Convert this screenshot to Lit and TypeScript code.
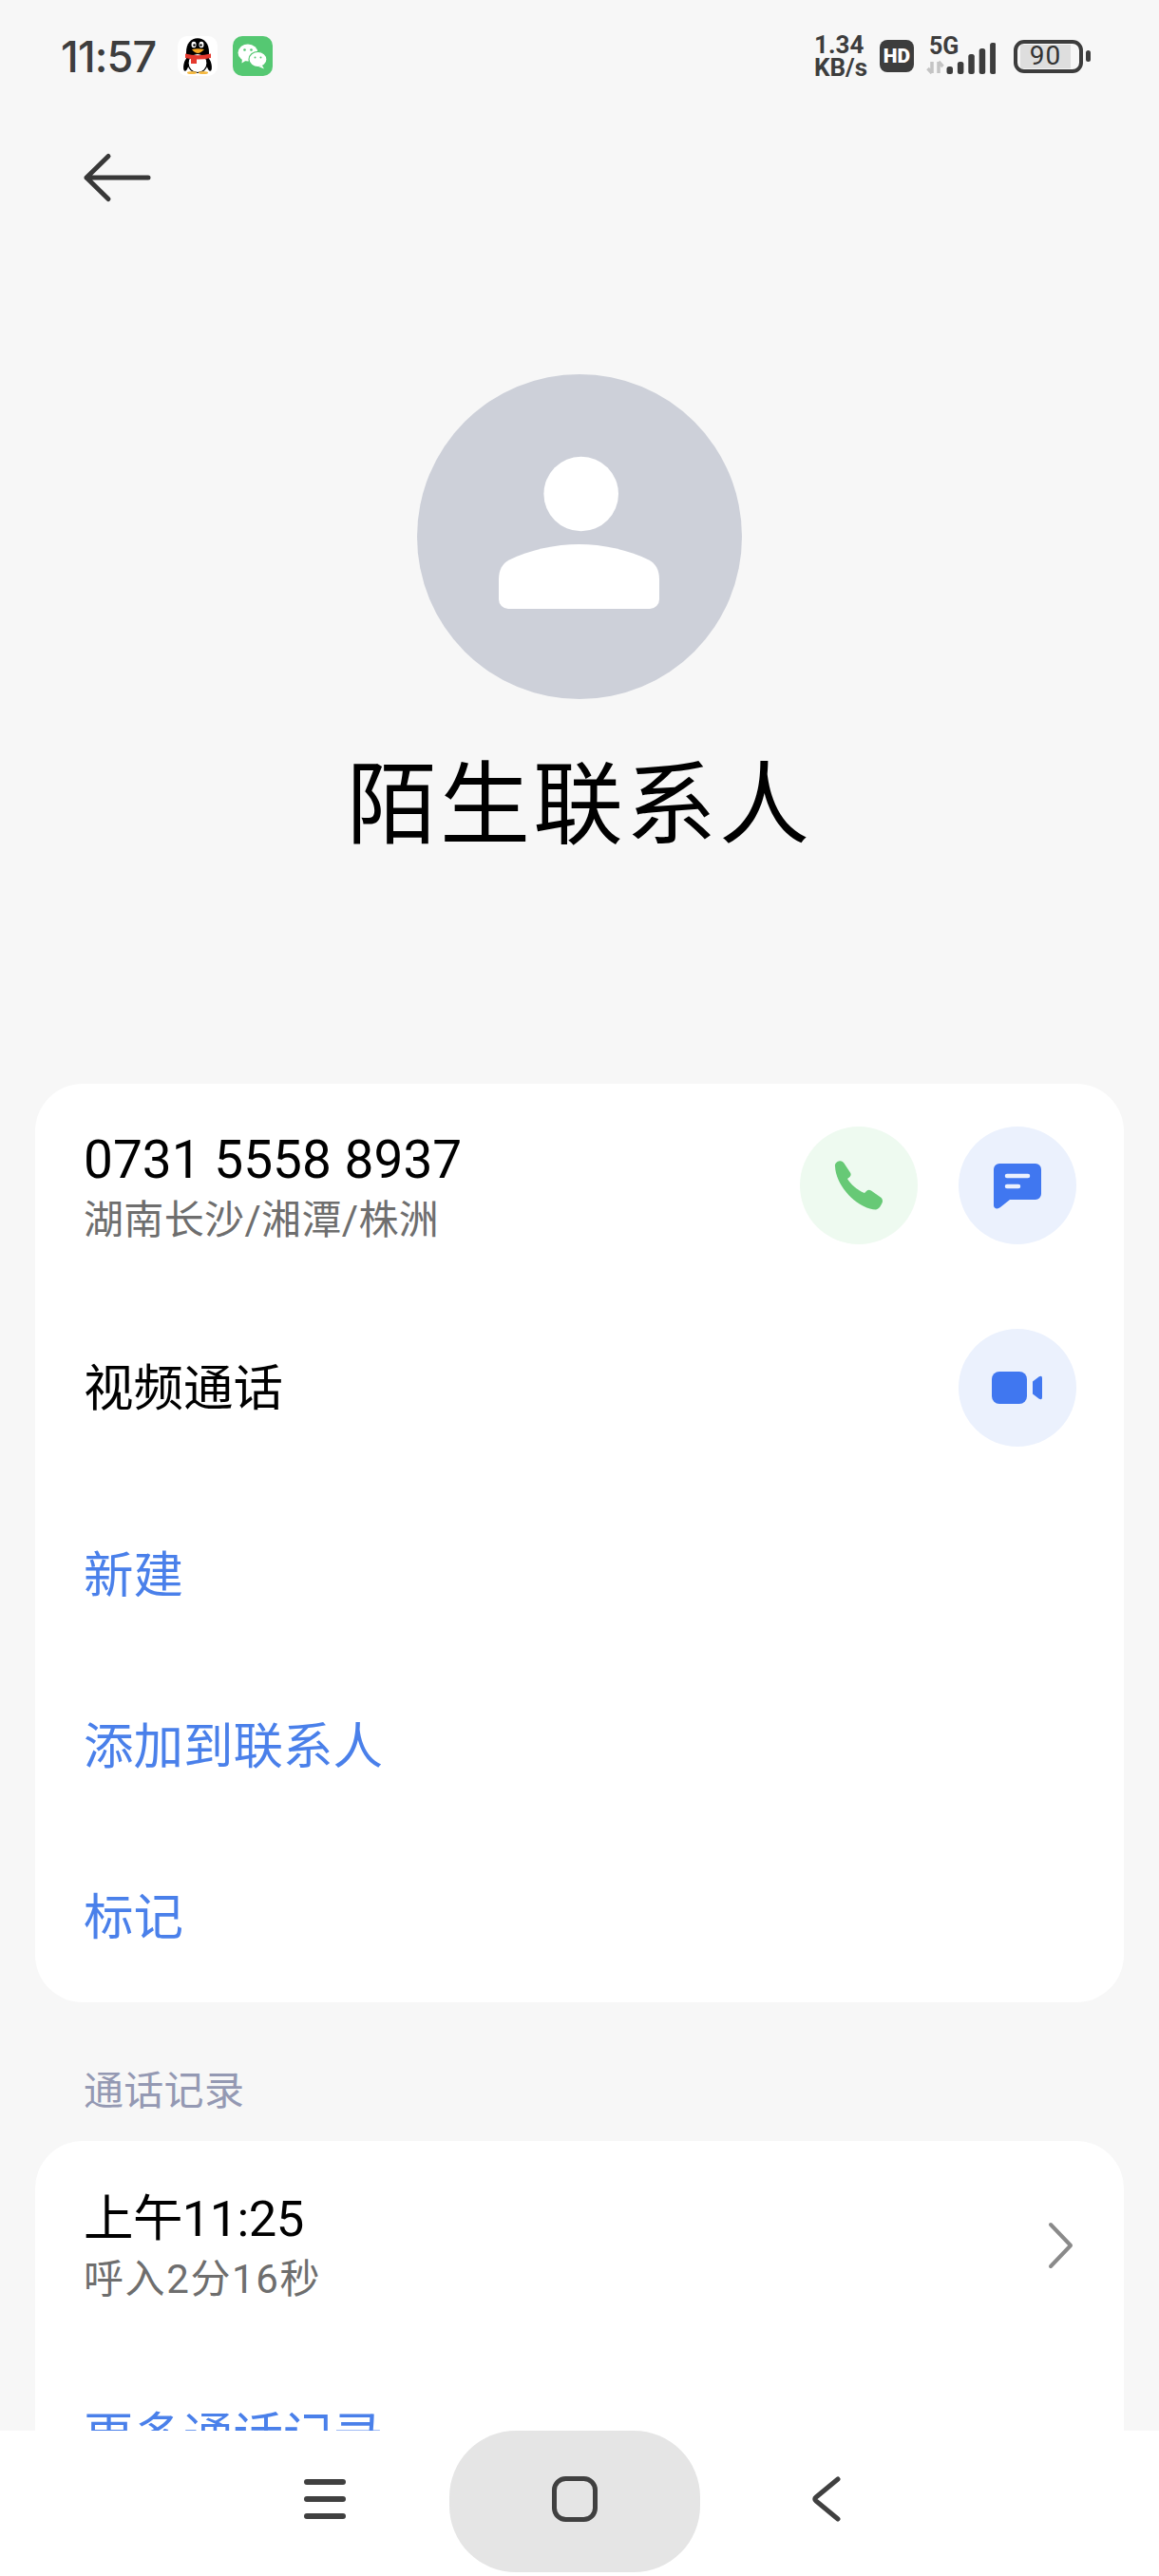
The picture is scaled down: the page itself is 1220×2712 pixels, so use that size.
import { LitElement, css, html, svg } from "lit";
import { customElement } from "lit/decorators.js";

const phoneIcon = svg`<path fill="#67c976" d="M37 42C36.5 39 39 36.5 42 36.2C44 36 45.5 37 46.4 38.5L53 48.5C54 50 53.8 51.8 52.6 53L50 55C53 60 60 67 68 70L70 68C71.5 66.5 73.5 66.5 75 67.5L85 74.5C87 76 87.5 78.5 86.5 80.5C85 84 83 87 80 87.5C62 87 38 64 37 42Z"/>`;

const messageIcon = svg`<path fill="#4077f0" d="M37 45a6 6 0 0 1 6-6h38a6 6 0 0 1 6 6v26a6 6 0 0 1-6 6H54L44 85C41 87.5 37 86.5 37 83Z"/>
  <path fill="none" stroke="#ebf1fd" stroke-width="4.5" stroke-linecap="round" d="M51 52H73M51 63H63"/>`;

const videoIcon = svg`<rect fill="#4077f0" x="35" y="45" width="37" height="34" rx="8"/>
  <path fill="#4077f0" d="M78 55.5L84.5 50.5Q88 48.5 88 52V72Q88 75.5 84.5 73.5L78 68.5Z"/>`;

@customElement("app-root")
export class AppRoot extends LitElement {
  static styles = css`
    :host {
      display: flex;
      flex-direction: column;
      width: 1220px;
      height: 2712px;
      overflow: hidden;
      background: #f7f7f7;
      font-family: Roboto, "Noto Sans CJK SC", sans-serif;
      color: #000;
    }
    svg {
      display: block;
    }
    .page {
      flex: 1;
      min-height: 0;
      overflow: hidden;
    }

    /* status bar */
    .status {
      height: 118px;
      display: flex;
      align-items: center;
      padding: 0 72px 0 64px;
      color: #3d3d3d;
    }
    .time {
      font-family: Inter, sans-serif;
      font-size: 45px;
      font-weight: 500;
      letter-spacing: -0.8px;
      margin-right: 22.5px;
    }
    .app-icons {
      display: flex;
      gap: 16px;
    }
    .status-right {
      margin-left: auto;
      display: flex;
      align-items: center;
    }
    .speed {
      font-size: 26px;
      font-weight: 700;
      line-height: 24px;
      width: 69px;
      margin-left: -2px;
    }
    .hd {
      width: 36px;
      height: 34px;
      border-radius: 8px;
      background: #3d3d3d;
      color: #fff;
      font-size: 21px;
      font-weight: 900;
      display: flex;
      align-items: center;
      justify-content: center;
      margin-right: 13px;
    }
    .signal {
      width: 73px;
      height: 38px;
      display: flex;
      flex-direction: column;
    }
    .signal-label {
      font-size: 25px;
      font-weight: 700;
      line-height: 18px;
      margin-left: 3px;
      height: 0;
    }
    .battery {
      margin-left: 19px;
      display: flex;
      align-items: center;
      gap: 3px;
    }
    .battery-body {
      box-sizing: border-box;
      width: 73px;
      height: 35px;
      border: 4.5px solid #3d3d3d;
      border-radius: 11px;
      padding: 1px 9px 1px 3px;
      display: flex;
    }
    .battery-level {
      flex: 1;
      background: #dedede;
      text-align: center;
      font-size: 28px;
      line-height: 24px;
      font-weight: 400;
      color: #333;
      letter-spacing: 1px;
    }
    .battery-nub {
      width: 5px;
      height: 12px;
      border-radius: 2.5px;
      background: #3d3d3d;
    }

    /* heading */
    .back {
      height: 138px;
      display: flex;
      align-items: center;
      padding-left: 85px;
    }
    .avatar {
      margin: 138px auto 0;
      width: 342px;
      height: 342px;
    }
    .name {
      margin-top: 59px;
      height: 104px;
      line-height: 107px;
      text-align: center;
      font-size: 95px;
      letter-spacing: 3px;
    }

    /* cards */
    .card {
      margin: 0 37px;
      background: #fff;
      border-radius: 50px;
    }
    .card.contact {
      margin-top: 242px;
    }
    .row {
      display: flex;
      align-items: center;
      height: 180px;
      padding: 0 50px 0 51px;
    }
    .row.tall {
      height: 213.5px;
    }
    .row.call {
      height: 220px;
    }
    .row-text {
      flex: 1;
      margin-top: 10px;
    }
    .call .row-text {
      margin-top: 8px;
    }
    .title {
      font-size: 52.5px;
      line-height: 64px;
    }
    .row-text.title {
      margin-top: 2px;
    }
    .number {
      font-size: 55px;
    }
    .clock {
      letter-spacing: -0.6px;
    }
    .sub {
      font-size: 42px;
      line-height: 64px;
      letter-spacing: 0.35px;
      color: #6e6e6e;
    }
    .sub.duration {
      letter-spacing: 1.6px;
    }
    .link {
      color: #4a80ea;
      margin-top: 2px;
    }
    .actions {
      display: flex;
      gap: 43px;
    }
    .round {
      width: 124px;
      height: 124px;
      border-radius: 50%;
      background: #ebf1fd;
    }
    .round.green {
      background: #eefaf0;
    }
    .section-label {
      height: 113px;
      padding: 33px 0 0 88px;
      display: flex;
      align-items: center;
      font-size: 42px;
      letter-spacing: 0.3px;
      color: #9499b3;
    }

    /* navigation bar */
    .nav {
      flex: none;
      height: 153px;
      background: #fff;
      display: flex;
      align-items: flex-start;
      padding-left: 320px;
    }
    .nav svg {
      margin-top: 48px;
    }
    .pill {
      margin: 0 117px 0 109px;
      width: 264px;
      height: 149px;
      border-radius: 70px;
      background: #e5e5e5;
      display: flex;
      justify-content: center;
    }
  `;

  renderQq() {
    return html`<svg width="42" height="42" viewBox="0 0 42 42">
      <rect width="42" height="42" rx="10" fill="#fff" />
      <ellipse cx="9" cy="30" rx="2.6" ry="7" fill="#000" transform="rotate(12 9 30)" />
      <ellipse cx="33" cy="30" rx="2.6" ry="7" fill="#000" transform="rotate(-12 33 30)" />
      <path d="M9 17C9 8 14 2.300 21 2.300S33 8 33 17V30H9Z" fill="#000" />
      <ellipse cx="21" cy="28.500" rx="10" ry="10" fill="#fff" stroke="#000" stroke-width="1.200" />
      <path d="M8 18.500Q21 22 35 18.500V23Q21 26 8 23Z" fill="#e53a2f" />
      <rect x="14" y="23" width="6" height="6" fill="#e53a2f" />
      <ellipse cx="17" cy="9" rx="2.500" ry="3.200" fill="#fff" />
      <ellipse cx="25" cy="9" rx="2.500" ry="3.200" fill="#fff" />
      <circle cx="17.500" cy="9.500" r="1.200" fill="#000" />
      <circle cx="24.500" cy="9.500" r="1.200" fill="#000" />
      <path d="M15 14Q21 12.500 28 14Q24 18 21.500 18Q18 18 15 14Z" fill="#f5a623" />
      <ellipse cx="15" cy="38.500" rx="5" ry="1.500" fill="#f5b942" />
      <ellipse cx="27" cy="38.500" rx="5" ry="1.500" fill="#f5b942" />
    </svg>`;
  }

  renderWechat() {
    return html`<svg width="42" height="42" viewBox="0 0 42 42">
      <rect width="42" height="42" rx="10" fill="#55c872" />
      <ellipse cx="16" cy="17.500" rx="10.500" ry="9" fill="#fff" />
      <path d="M10 23L9.500 28.500L15 25Z" fill="#fff" />
      <ellipse cx="26.500" cy="24.500" rx="9.500" ry="8.200" fill="#fff" stroke="#55c872" stroke-width="1.200" />
      <path d="M31 31L33 34.500L27 32Z" fill="#fff" />
      <circle cx="12.500" cy="14.500" r="1.300" fill="#55c872" />
      <circle cx="19.500" cy="14.500" r="1.300" fill="#55c872" />
      <circle cx="23.500" cy="22.500" r="1" fill="#55c872" />
      <circle cx="29.500" cy="22.500" r="1" fill="#55c872" />
    </svg>`;
  }

  renderSignal() {
    const bars = [8, 13, 21, 27, 33];
    return html`<div class="signal">
      <div class="signal-label">5G</div>
      <svg width="73" height="38" viewBox="0 0 73 38">
        <path
          d="M6 37V25M6 37L1.500 32M13 25V37M13 25L17.500 30"
          fill="none"
          stroke="#c4c4c4"
          stroke-width="3.500"
        />
        ${bars.map(
          (h, i) =>
            svg`<rect x=${21.5 + i * 11.4} y=${38 - h} width="6.500" height=${h} rx="2.500" fill="#3d3d3d" />`
        )}
      </svg>
    </div>`;
  }

  render() {
    return html`
      <div class="page">
        <div class="status">
          <span class="time">11:57</span>
          <div class="app-icons">${this.renderQq()}${this.renderWechat()}</div>
          <div class="status-right">
            <div class="speed">1.34<br />KB/s</div>
            <div class="hd">HD</div>
            ${this.renderSignal()}
            <div class="battery">
              <div class="battery-body"><div class="battery-level">90</div></div>
              <div class="battery-nub"></div>
            </div>
          </div>
        </div>

        <div class="back">
          <svg width="76" height="56" viewBox="0 0 76 56">
            <path
              d="M29 5.500L6 28L29 50.500M6 28H71"
              fill="none"
              stroke="#383838"
              stroke-width="5"
              stroke-linecap="round"
              stroke-linejoin="round"
            />
          </svg>
        </div>

        <svg class="avatar" viewBox="0 0 342 342">
          <circle cx="171" cy="171" r="171" fill="#cdd0d9" />
          <circle cx="172.700" cy="126" r="39.300" fill="#fff" />
          <path
            fill="#fff"
            d="M86 237V216C86 206 90 199 97 195.500C118 185 146 179 170.500 179C195 179 223 185 244 195.500C251 199 255 206 255 216V237A10 10 0 0 1 245 247H96A10 10 0 0 1 86 237Z"
          />
        </svg>

        <div class="name">陌生联系人</div>

        <div class="card contact">
          <div class="row tall">
            <div class="row-text">
              <div class="title number">0731 5558 8937</div>
              <div class="sub">湖南长沙/湘潭/株洲</div>
            </div>
            <div class="actions">
              <svg class="round green" viewBox="0 0 124 124">${phoneIcon}</svg>
              <svg class="round" viewBox="0 0 124 124">${messageIcon}</svg>
            </div>
          </div>
          <div class="row tall">
            <div class="row-text title">视频通话</div>
            <svg class="round" viewBox="0 0 124 124">${videoIcon}</svg>
          </div>
          <div class="row"><div class="title link">新建</div></div>
          <div class="row"><div class="title link">添加到联系人</div></div>
          <div class="row"><div class="title link">标记</div></div>
        </div>

        <div class="section-label">通话记录</div>

        <div class="card">
          <div class="row call">
            <div class="row-text">
              <div class="title clock">上午11:25</div>
              <div class="sub duration">呼入2分16秒</div>
            </div>
            <svg width="32" height="50" viewBox="0 0 32 50">
              <path
                d="M5 3L26 25L5 47"
                fill="none"
                stroke="#8a8a8a"
                stroke-width="4"
                stroke-linecap="round"
                stroke-linejoin="round"
              />
            </svg>
          </div>
          <div class="row"><div class="title link">更多通话记录</div></div>
        </div>
      </div>

      <div class="nav">
        <svg width="44" height="48" viewBox="0 0 44 48">
          <path
            d="M3 6H41M3 24H41M3 42H41"
            fill="none"
            stroke="#404040"
            stroke-width="6"
            stroke-linecap="round"
          />
        </svg>
        <div class="pill">
          <svg width="48" height="48" viewBox="0 0 48 48">
            <rect x="2.500" y="2.500" width="43" height="43" rx="12" fill="none" stroke="#404040" stroke-width="5" />
          </svg>
        </div>
        <svg width="32" height="48" viewBox="0 0 32 48">
          <path
            d="M28 3L5 22Q2.500 24 5 26L28 45"
            fill="none"
            stroke="#404040"
            stroke-width="5"
            stroke-linecap="round"
            stroke-linejoin="round"
          />
        </svg>
      </div>
    `;
  }
}
